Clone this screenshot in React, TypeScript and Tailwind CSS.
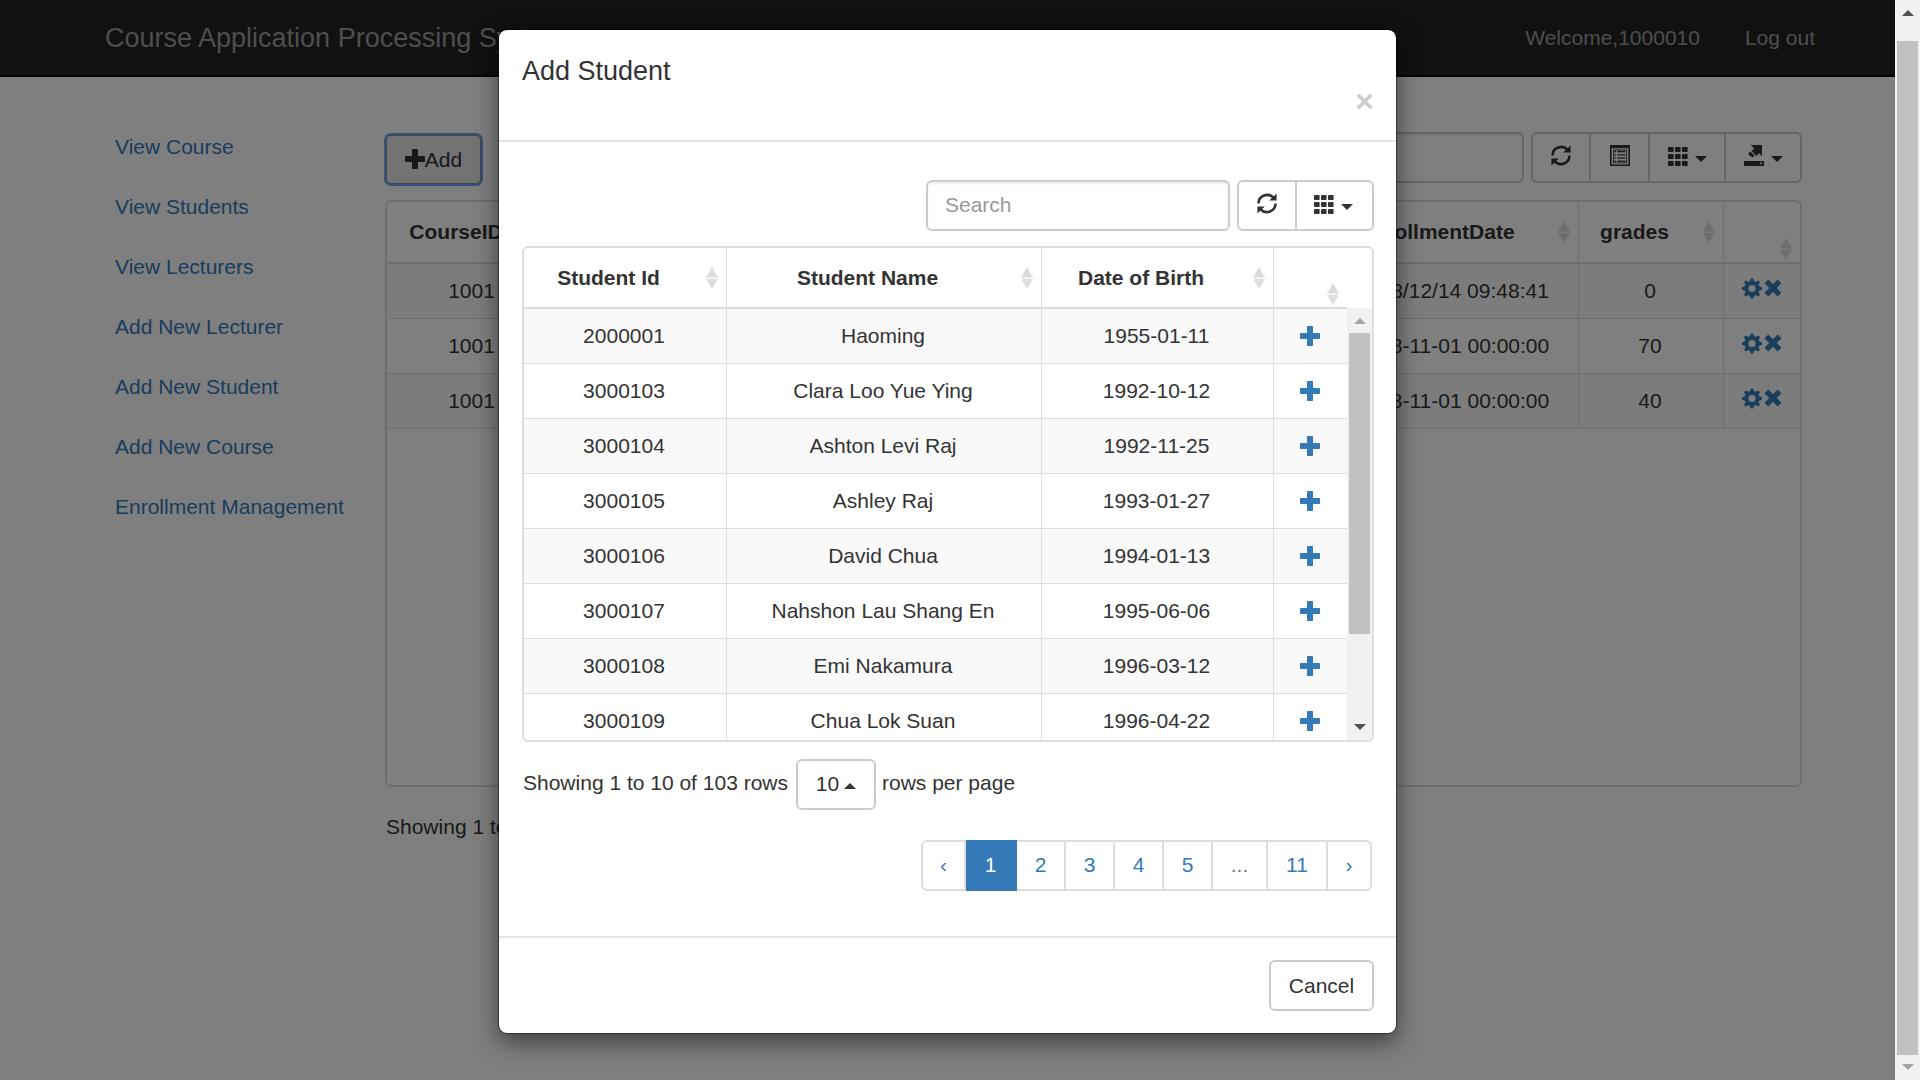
import React from "react";

const navLinks = [
  "View Course",
  "View Students",
  "View Lecturers",
  "Add New Lecturer",
  "Add New Student",
  "Add New Course",
  "Enrollment Management",
];

const enrollments = [
  { course: "1001", date: "2018/12/14 09:48:41", grade: "0" },
  { course: "1001", date: "2018-11-01 00:00:00", grade: "70" },
  { course: "1001", date: "2018-11-01 00:00:00", grade: "40" },
];

const students = [
  { id: "2000001", name: "Haoming", dob: "1955-01-11" },
  { id: "3000103", name: "Clara Loo Yue Ying", dob: "1992-10-12" },
  { id: "3000104", name: "Ashton Levi Raj", dob: "1992-11-25" },
  { id: "3000105", name: "Ashley Raj", dob: "1993-01-27" },
  { id: "3000106", name: "David Chua", dob: "1994-01-13" },
  { id: "3000107", name: "Nahshon Lau Shang En", dob: "1995-06-06" },
  { id: "3000108", name: "Emi Nakamura", dob: "1996-03-12" },
  { id: "3000109", name: "Chua Lok Suan", dob: "1996-04-22" },
];

const pages = [
  { label: "‹", name: "Previous page", cls: "w-[45px] rounded-l-md border-l-2 text-[#337ab7]" },
  { label: "1", name: "Page 1", cls: "w-[51px] border-[#337ab7] bg-[#337ab7] text-white" },
  { label: "2", name: "Page 2", cls: "w-[49px] text-[#337ab7]" },
  { label: "3", name: "Page 3", cls: "w-[49px] text-[#337ab7]" },
  { label: "4", name: "Page 4", cls: "w-[49px] text-[#337ab7]" },
  { label: "5", name: "Page 5", cls: "w-[49px] text-[#337ab7]" },
  { label: "...", name: "More pages", cls: "w-[55px] text-[#777]" },
  { label: "11", name: "Page 11", cls: "w-[60px] text-[#337ab7]" },
  { label: "›", name: "Next page", cls: "w-[44px] rounded-r-md text-[#337ab7]" },
];

function PlusIcon() {
  return (
    <svg width="20" height="20" viewBox="0 0 20 20" fill="currentColor" aria-hidden="true">
      <path d="M7.8 0h4.4q.8 0 .8.8V7h6.2q.8 0 .8.8v4.4q0 .8-.8.8H13v6.2q0 .8-.8.8H7.8q-.8 0-.8-.8V13H.8q-.8 0-.8-.8V7.8Q0 7 .8 7H7V.8q0-.8.8-.8z" />
    </svg>
  );
}

function RefreshIcon() {
  return (
    <svg width="20" height="21" viewBox="0 0 20 21" aria-hidden="true">
      <g fill="none" stroke="currentColor" strokeWidth="2.6">
        <path d="M1.5 10.5A8.6 8.6 0 0 1 16.4 4.7" />
        <path d="M18.5 10.5A8.6 8.6 0 0 1 3.6 16.3" />
      </g>
      <path fill="currentColor" d="M19.6.4v7.2h-7.4zM.4 20.6v-7.2h7.4z" />
    </svg>
  );
}

function GridIcon() {
  const cells = [0, 7, 14];
  return (
    <svg width="20" height="19" viewBox="0 0 20 19" fill="currentColor" aria-hidden="true">
      {cells.map((x) => cells.map((y) => <rect key={`${x}-${y}`} x={x} y={y} width="5.6" height="5" rx=".7" />))}
    </svg>
  );
}

function ListIcon() {
  const rows = [6.6, 9.8, 13, 16.2];
  return (
    <svg width="20" height="21" viewBox="0 0 20 21" fill="currentColor" aria-hidden="true">
      <path fillRule="evenodd" d="M0 0h20v21H0zM1.6 3.2v16.2h16.8V3.2z" />
      <path fillRule="evenodd" d="M3 4.6h14v13.6H3zM3.8 5.4v12h12.4v-12z" />
      {rows.map((y) => (
        <g key={y}>
          <rect x="4.4" y={y - 0.6} width="1.6" height="1.3" />
          <rect x="7.2" y={y - 0.6} width="8.2" height="1.3" />
        </g>
      ))}
    </svg>
  );
}

function ExportIcon() {
  return (
    <svg width="20" height="21" viewBox="0 0 20 21" fill="currentColor" aria-hidden="true">
      <path d="M6.6 0H18v11.2l-3-2.9-2.5 2.6-5-4.8 2.6-2.6z" />
      <path d="M6.3 6.6l4.2 4-1.6 2-2-1-2.9-2.8z" />
      <path fillRule="evenodd" d="M.6 16h18.8q.6 0 .6.6V21H0v-4.4q0-.6.6-.6zM15.8 17.6v1.6h2v-1.6z" />
    </svg>
  );
}

function CogIcon() {
  const teeth = [0, 45, 90, 135, 180, 225, 270, 315];
  return (
    <svg width="20" height="21" viewBox="0 0 20 20" aria-hidden="true">
      <circle cx="10" cy="10" r="5.5" fill="none" stroke="currentColor" strokeWidth="3.8" />
      {teeth.map((a) => (
        <path key={a} fill="currentColor" d="M7.6 3.6L8.8 0h2.4l1.2 3.6z" transform={`rotate(${a} 10 10)`} />
      ))}
    </svg>
  );
}

function RemoveIcon() {
  return (
    <svg width="18" height="18" viewBox="0 0 18 18" aria-hidden="true">
      <path d="M2.4 2.4l13.2 13.2M15.6 2.4L2.4 15.6" stroke="currentColor" strokeWidth="5.4" />
    </svg>
  );
}

function Caret({ up = false }: { up?: boolean }) {
  return (
    <svg width="12" height="6" viewBox="0 0 12 6" fill="currentColor" aria-hidden="true">
      <path d={up ? "M0 6h12L6 0z" : "M0 0h12L6 6z"} />
    </svg>
  );
}

function SortIcon() {
  return (
    <svg className="shrink-0" width="12" height="22" viewBox="0 0 12 22" fill="#ddd" aria-hidden="true">
      <path d="M0 10.4h12L6 0zM0 11.8h12L6 22z" />
    </svg>
  );
}

function Head({ children, last = false }: { children?: React.ReactNode; last?: boolean }) {
  return (
    <th
      scope="col"
      aria-label={children ? undefined : last ? "Actions" : "Details"}
      className={
        last
          ? "border-b-2 border-[#ddd] p-0 pb-0.5 align-bottom"
          : "border-r border-b-2 border-[#ddd] p-0 align-middle"
      }
    >
      <div className="flex items-center pr-2 pl-3">
        <span className="flex-1 text-center whitespace-nowrap">{children}</span>
        <span className="ml-[25px]">
          <SortIcon />
        </span>
      </div>
    </th>
  );
}

const cell = "border-r border-b border-[#ddd] p-0 pr-0.5 text-center whitespace-nowrap";
const lastCell = "border-b border-[#ddd] p-0";
const groupButton = "flex h-[51px] items-center justify-center border-2 border-[#ccc] bg-white";

function ScrollArrow({ up = false, color }: { up?: boolean; color: string }) {
  return (
    <svg width="12" height="6" viewBox="0 0 12 6" fill={color} aria-hidden="true">
      <path d={up ? "M0 6h12L6 0z" : "M0 0h12L6 6z"} />
    </svg>
  );
}

function Page() {
  return (
    <>
      <header className="flex h-[77px] items-center justify-between border-b-2 border-[#080808] bg-[#222] pr-20 pl-[105px] text-[#9d9d9d]">
        <a href="#home" className="text-[27px] leading-[38px]">
          Course Application Processing System
        </a>
        <div className="flex gap-[45px]">
          <span>Welcome,1000010</span>
          <a href="#logout">Log out</a>
        </div>
      </header>
      <div className="flex pt-[55px] pr-[93px] pl-[115px]">
        <nav className="flex w-[270px] shrink-0 flex-col items-start gap-[30px] text-[#337ab7]">
          {navLinks.map((l) => (
            <a key={l} href="#nav">
              {l}
            </a>
          ))}
        </nav>
        <main className="min-w-0 flex-1">
          <div className="flex h-[51px] items-start">
            <button
              type="button"
              className="mt-0.5 flex h-[51px] w-[97px] shrink-0 items-center justify-center rounded-md border-2 border-[#8c8c8c] bg-[#e6e6e6] outline-2 -outline-offset-1 outline-[#6aa0ff]"
            >
              <span className="mb-0.5">
                <PlusIcon />
              </span>
              Add
            </button>
            <input
              type="text"
              aria-label="Search enrollments"
              className="ml-auto h-[51px] w-[304px] rounded-md border-2 border-[#ccc] bg-white px-[18px] shadow-[inset_0_2px_2px_rgba(0,0,0,0.075)]"
            />
            <div className="ml-[7px] flex">
              <button type="button" aria-label="Refresh" className={`${groupButton} w-[60px] rounded-l-md pb-1`}>
                <RefreshIcon />
              </button>
              <button type="button" aria-label="Toggle view" className={`${groupButton} w-[59px] border-l-0 pb-1`}>
                <ListIcon />
              </button>
              <button type="button" aria-label="Columns" className={`${groupButton} w-[76px] gap-[7px] border-l-0`}>
                <span className="mb-0.5">
                  <GridIcon />
                </span>
                <span className="mt-0.5">
                  <Caret />
                </span>
              </button>
              <button
                type="button"
                aria-label="Export data"
                className={`${groupButton} w-[76px] gap-[7px] rounded-r-md border-l-0`}
              >
                <span className="mb-1">
                  <ExportIcon />
                </span>
                <span className="mt-0.5">
                  <Caret />
                </span>
              </button>
            </div>
          </div>
          <div className="mt-[17px] min-h-[587px] overflow-hidden rounded-md border-2 border-[#ddd]">
            <table className="w-full table-fixed border-separate border-spacing-0">
              <colgroup>
                <col className="w-[172px]" />
                <col />
                <col className="w-[250px]" />
                <col className="w-[145px]" />
                <col className="w-[76px]" />
              </colgroup>
              <thead>
                <tr className="h-[62px]">
                  <Head>CourseID</Head>
                  <Head />
                  <Head>EnrollmentDate</Head>
                  <Head>grades</Head>
                  <Head last />
                </tr>
              </thead>
              <tbody>
                {enrollments.map((e, i) => (
                  <tr key={i} className="h-[55px] odd:bg-[#f9f9f9]">
                    <td className={cell}>{e.course}</td>
                    <td className={cell} />
                    <td className={cell}>{e.date}</td>
                    <td className={cell}>{e.grade}</td>
                    <td className={lastCell}>
                      <div className="flex items-center justify-center gap-0.5 pb-1.5 text-[#337ab7]">
                        <a href="#edit" aria-label="Edit">
                          <CogIcon />
                        </a>
                        <a href="#remove" aria-label="Remove">
                          <RemoveIcon />
                        </a>
                      </div>
                    </td>
                  </tr>
                ))}
              </tbody>
            </table>
          </div>
          <p className="mt-[25px] ml-px">Showing 1 to 3 of 3 rows</p>
        </main>
      </div>
    </>
  );
}

function AddStudentDialog() {
  return (
    <section
      role="dialog"
      aria-modal="true"
      aria-labelledby="dialog-title"
      className="w-[899px] rounded-[9px] border border-black/40 bg-white bg-clip-padding shadow-[0_8px_23px_rgba(0,0,0,0.5)]"
    >
      <div className="flex h-[112px] flex-col border-b-2 border-[#e5e5e5] pt-[22px] pr-[22px] pl-[23px]">
        <h4 id="dialog-title" className="text-[27px] leading-[38px]">
          Add Student
        </h4>
        <button type="button" aria-label="Close" className="mt-px self-end text-[32px] leading-5 font-bold text-[#ccc]">
          ×
        </button>
      </div>
      <div className="pt-[38px] pr-[22px] pb-[45px] pl-[23px]">
        <div className="flex justify-end">
          <input
            type="text"
            placeholder="Search"
            aria-label="Search students"
            className="h-[51px] w-[304px] rounded-md border-2 border-[#ccc] bg-white px-[17px] pb-0.5 shadow-[inset_0_2px_2px_rgba(0,0,0,0.075)] placeholder:text-[#999]"
          />
          <div className="ml-[7px] flex">
            <button type="button" aria-label="Refresh" className={`${groupButton} w-[60px] rounded-l-md pb-1`}>
              <RefreshIcon />
            </button>
            <button
              type="button"
              aria-label="Columns"
              className={`${groupButton} w-[77px] gap-[7px] rounded-r-md border-l-0 pr-0.5`}
            >
              <span className="mb-0.5">
                <GridIcon />
              </span>
              <span className="mt-0.5">
                <Caret />
              </span>
            </button>
          </div>
        </div>
        <div className="mt-[15px] flex h-[496px] overflow-hidden rounded-md border-2 border-[#ddd]">
          <div className="min-w-0 flex-1">
            <table className="w-full table-fixed border-separate border-spacing-0">
              <colgroup>
                <col className="w-[203px]" />
                <col />
                <col className="w-[232px]" />
                <col className="w-[73px]" />
              </colgroup>
              <thead>
                <tr className="h-[61px]">
                  <Head>Student Id</Head>
                  <Head>Student Name</Head>
                  <Head>Date of Birth</Head>
                  <Head last />
                </tr>
              </thead>
              <tbody>
                {students.map((s) => (
                  <tr key={s.id} className="h-[55px] odd:bg-[#f9f9f9]">
                    <td className={cell}>{s.id}</td>
                    <td className={cell}>{s.name}</td>
                    <td className={cell}>{s.dob}</td>
                    <td className={lastCell}>
                      <a href="#add" aria-label={`Add ${s.name}`} className="flex justify-center pr-0.5 text-[#337ab7]">
                        <PlusIcon />
                      </a>
                    </td>
                  </tr>
                ))}
              </tbody>
            </table>
          </div>
          <div className="mt-[60px] flex w-[25px] flex-col items-center bg-[#f1f1f1] pt-2.5 pb-2.5">
            <ScrollArrow up color="#a3a3a3" />
            <div className="mt-[9px] h-[301px] w-[21px] bg-[#c1c1c1]" />
            <span className="mt-auto">
              <ScrollArrow color="#505050" />
            </span>
          </div>
        </div>
        <div className="mt-[17px] flex items-center">
          <span className="ml-px pb-[3px]">Showing 1 to 10 of 103 rows</span>
          <button
            type="button"
            aria-haspopup="listbox"
            className="mr-[6px] ml-2 flex h-[51px] w-20 items-center justify-center gap-[5px] rounded-md border-2 border-[#ccc] bg-white pb-0.5"
          >
            10
            <span className="mt-1">
              <Caret up />
            </span>
          </button>
          <span className="pb-[3px]">rows per page</span>
        </div>
        <nav aria-label="Pagination" className="mt-[30px] mr-0.5 flex justify-end">
          {pages.map((p) => (
            <a
              key={p.label}
              href="#page"
              aria-label={p.name}
              className={`flex h-[51px] items-center justify-center border-y-2 border-r-2 pb-0.5 ${
                p.label === "1" ? "" : "border-[#ddd]"
              } ${p.cls}`}
            >
              {p.label}
            </a>
          ))}
        </nav>
      </div>
      <div className="flex justify-end border-t-2 border-[#e5e5e5] py-[22px] pr-[22px]">
        <button type="button" className="h-[51px] w-[105px] rounded-md border-2 border-[#ccc] bg-white">
          Cancel
        </button>
      </div>
    </section>
  );
}

export default function App() {
  return (
    <div className="flex h-screen overflow-hidden bg-white font-['Liberation_Sans',Arial,sans-serif] text-[21px] leading-[30px] text-[#333]">
      <div className="relative min-w-0 flex-1 overflow-hidden">
        <Page />
        <div className="absolute inset-0 flex items-start justify-center bg-black/50 pt-[29px]">
          <AddStudentDialog />
        </div>
      </div>
      <div className="flex w-[25px] shrink-0 flex-col items-center bg-[#f1f1f1] py-2.5">
        <ScrollArrow up color="#505050" />
        <div className="mt-[25px] mb-[9px] w-[21px] flex-1 bg-[#c1c1c1]" />
        <ScrollArrow color="#a3a3a3" />
      </div>
    </div>
  );
}
